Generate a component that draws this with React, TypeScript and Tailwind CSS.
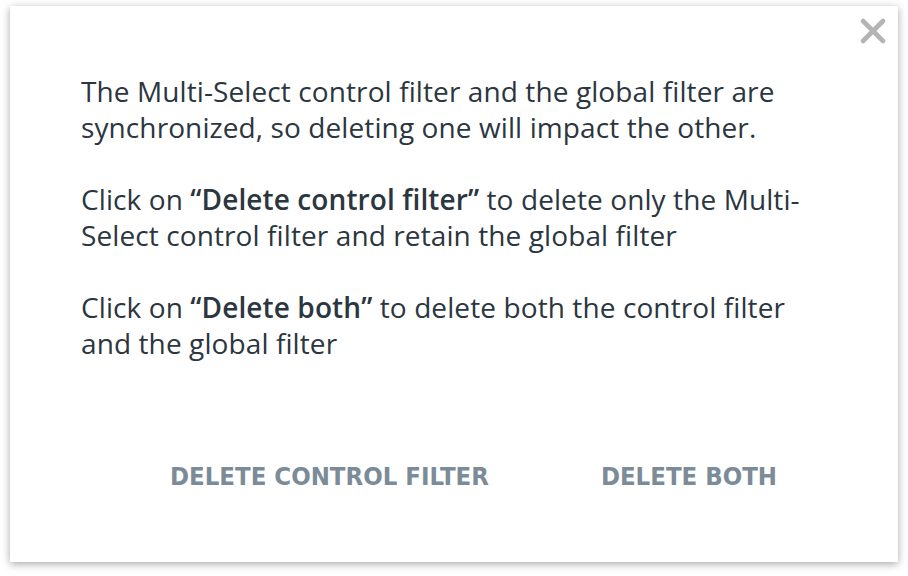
import { X } from 'lucide-react'

export default function App() {
  return (
    <div className="min-h-screen bg-white pl-[10px] pt-[6px]">
      <div
        className="relative flex h-[556px] w-[888px] flex-col bg-white shadow-[0_2px_8px_rgba(0,0,0,0.35)]"
        style={{ fontFamily: '"Open Sans", "Noto Sans", sans-serif' }}
      >
        <button className="absolute right-[5px] top-[5px] text-[#b4b4b4]">
          <X className="h-10 w-10" strokeWidth={2.8} />
        </button>
        <div className="flex flex-col gap-9 pl-[71px] pr-[40px] pt-[67px] text-[28px] leading-[36px] tracking-[0.1px] text-[#2b3640]">
          <p>
            The Multi-Select control filter and the global filter are
            <br />
            synchronized, so deleting one will impact the other.
          </p>
          <p>
            Click on <b className="font-semibold">“Delete control filter”</b> to delete only the Multi-
            <br />
            Select control filter and retain the global filter
          </p>
          <p>
            Click on <b className="font-semibold">“Delete both”</b> to delete both the control filter
            <br />
            and the global filter
          </p>
        </div>
        <div
          className="mt-auto mb-[67px] flex items-center pl-[152px] text-[25.5px] font-bold text-[#7b8b98]"
          style={{ fontFamily: '"Liberation Sans Narrow", "DejaVu Sans Condensed", sans-serif' }}
        >
          <button className="px-2 uppercase">Delete control filter</button>
          <button className="ml-[96px] px-2 uppercase">Delete both</button>
        </div>
      </div>
    </div>
  )
}
